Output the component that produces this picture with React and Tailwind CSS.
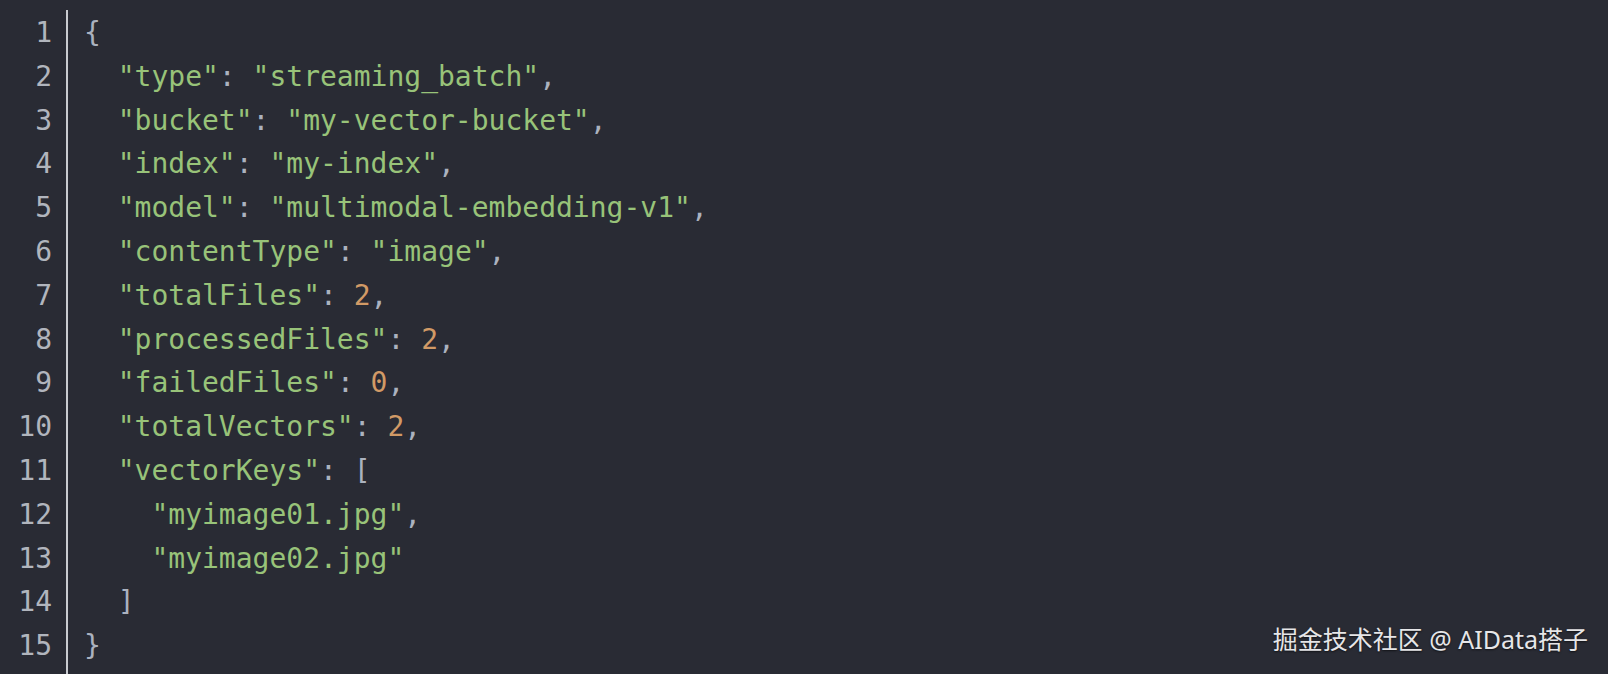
import React from "react";

const G = ({ children }) => <span className="text-[#98c379]">{children}</span>;
const P = ({ children }) => <span className="text-[#abb2bf]">{children}</span>;
const N = ({ children }) => <span className="text-[#d19a66]">{children}</span>;

const lines = [
  [<P key="a">{"{"}</P>],
  [<G key="a">{'  "type"'}</G>, <P key="b">: </P>, <G key="c">"streaming_batch"</G>, <P key="d">,</P>],
  [<G key="a">{'  "bucket"'}</G>, <P key="b">: </P>, <G key="c">"my-vector-bucket"</G>, <P key="d">,</P>],
  [<G key="a">{'  "index"'}</G>, <P key="b">: </P>, <G key="c">"my-index"</G>, <P key="d">,</P>],
  [<G key="a">{'  "model"'}</G>, <P key="b">: </P>, <G key="c">"multimodal-embedding-v1"</G>, <P key="d">,</P>],
  [<G key="a">{'  "contentType"'}</G>, <P key="b">: </P>, <G key="c">"image"</G>, <P key="d">,</P>],
  [<G key="a">{'  "totalFiles"'}</G>, <P key="b">: </P>, <N key="c">2</N>, <P key="d">,</P>],
  [<G key="a">{'  "processedFiles"'}</G>, <P key="b">: </P>, <N key="c">2</N>, <P key="d">,</P>],
  [<G key="a">{'  "failedFiles"'}</G>, <P key="b">: </P>, <N key="c">0</N>, <P key="d">,</P>],
  [<G key="a">{'  "totalVectors"'}</G>, <P key="b">: </P>, <N key="c">2</N>, <P key="d">,</P>],
  [<G key="a">{'  "vectorKeys"'}</G>, <P key="b">: [</P>],
  [<G key="a">{'    "myimage01.jpg"'}</G>, <P key="b">,</P>],
  [<G key="a">{'    "myimage02.jpg"'}</G>],
  [<P key="a">{"  ]"}</P>],
  [<P key="a">{"}"}</P>],
];

export default function App() {
  return (
    <div className="relative w-[1608px] h-[674px] overflow-hidden bg-[#292b34]">
      <div
        className="flex pt-[11px] text-[28px] leading-[43.8px] whitespace-pre"
        style={{ fontFamily: '"DejaVu Sans Mono", "Liberation Mono", monospace' }}
      >
        <div className="w-[52px] shrink-0 flex flex-col items-end text-[#b1b5bd]">
          {lines.map((_, i) => (
            <div key={i}>{i + 1}</div>
          ))}
        </div>
        <div className="ml-[14px] w-[2px] shrink-0 mt-[-1px] h-[664px] bg-[#c9cbd0]" />
        <div className="ml-[16px] flex flex-col">
          {lines.map((l, i) => (
            <div key={i}>{l}</div>
          ))}
        </div>
      </div>
      <div
        className="absolute right-[20px] bottom-[22px] text-[25px] leading-none text-[#e6e6e8] [text-shadow:0_1px_2px_rgba(0,0,0,0.6)]"
        style={{ fontFamily: '"Noto Sans", "Noto Sans CJK SC", sans-serif' }}
      >
        掘金技术社区 @ AIData搭子
      </div>
    </div>
  );
}
